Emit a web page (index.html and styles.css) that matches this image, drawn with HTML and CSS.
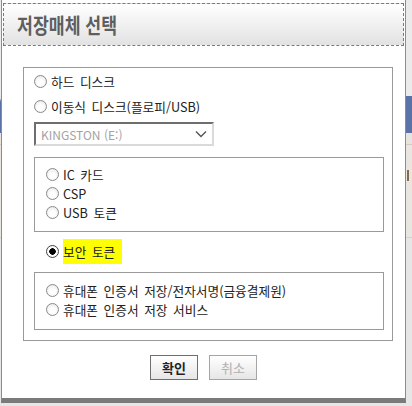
FILE: index.html
```html
<!DOCTYPE html>
<html lang="ko">
<head>
    <meta charset="UTF-8">
    <meta name="viewport" content="width=device-width, initial-scale=1.0">
    <title>저장매체 선택</title>
    <link rel="stylesheet" href="styles.css">
</head>
<body>
    <!-- page behind the modal -->
    <div class="backdrop">
        <div class="bd-top"></div>
        <div class="bd-nav"></div>
        <div class="bd-body"><span class="bd-tab"></span></div>
    </div>

    <div class="dialog">
        <div class="dialog-title">
            <h1>저장매체 선택</h1>
        </div>
        <div class="dialog-body">
            <div class="group">
                <label class="opt"><input type="radio" name="media"><span>하드 디스크</span></label>
                <label class="opt"><input type="radio" name="media"><span>이동식 디스크(플로피/USB)</span></label>
                <div class="drive">
                    <span>KINGSTON (E:)</span>
                    <svg width="12" height="8" viewBox="0 0 12 8"><path d="M1 1.5 L6 6.5 L11 1.5" fill="none" stroke="#555" stroke-width="1.4"/></svg>
                </div>

                <div class="subgroup">
                    <label class="opt opt-sm"><input type="radio" name="media"><span>IC 카드</span></label>
                    <label class="opt opt-sm"><input type="radio" name="media"><span>CSP</span></label>
                    <label class="opt opt-sm"><input type="radio" name="media"><span>USB 토큰</span></label>
                </div>

                <label class="opt opt-token"><input type="radio" name="media" checked><span class="mark">보안 토큰</span></label>

                <div class="subgroup subgroup-phone">
                    <label class="opt opt-sm"><input type="radio" name="media"><span>휴대폰 인증서 저장/전자서명(금융결제원)</span></label>
                    <label class="opt opt-sm"><input type="radio" name="media"><span>휴대폰 인증서 저장 서비스</span></label>
                </div>
            </div>

            <div class="actions">
                <button class="btn">확인</button>
                <button class="btn" disabled>취소</button>
            </div>
        </div>
    </div>
</body>
</html>
```

FILE: styles.css
```css
body {
    margin: 0;
    padding: 0;
    background-color: #e6e6e6;
    font-family: "Noto Sans CJK KR", "Noto Sans", sans-serif;
    font-size: 12.7px;
    color: #222;
    overflow: hidden;
}

/* page behind the modal */
.backdrop {
    position: absolute;
    top: 0;
    left: 0;
    right: 0;
}

.bd-top {
    height: 96px;
    background-color: #ebebeb;
}

.bd-nav {
    height: 37px;
    background-color: #5a72a6;
    border-top-left-radius: 6px;
}

.bd-body {
    height: 105px;
    background-color: #e9e5e1;
    border-top: 11px solid #e7e3df;
    border-bottom: 1px solid #d6d0ca;
    box-shadow: inset 0 1px 0 #d3cbc3;
    padding-left: 407px;
    box-sizing: border-box;
}

.bd-tab {
    display: inline-block;
    width: 4px;
    height: 11px;
    margin-top: 26px;
    border-left: 2px solid #8a6a48;
    border-right: 2px solid #8a6a48;
}

/* modal */
.dialog {
    position: absolute;
    top: 0;
    left: 1px;
    width: 403px;
    height: 398px;
    background-color: #fff;
    border-left: 1px solid #8c8c8c;
    border-right: 1px solid #8c8c8c;
    border-bottom: 5px solid #7a7a7a;
}

.dialog-title {
    margin: 3px 1px 0 1px;
    height: 41px;
    border: 1px dashed #7a7a7a;
    background: linear-gradient(to bottom, #ffffff, #e2e2e2);
}

.dialog-title h1 {
    margin: 0;
    padding: 8px 0 0 16px;
    font-size: 21px;
    line-height: 24px;
    font-weight: bold;
    color: #5e5e5e;
    transform: scaleX(0.82);
    transform-origin: left center;
    white-space: nowrap;
}

.dialog-body {
    padding: 21px 0 0 21px;
}

.group {
    width: 358px;
    border: 1px solid #9a9a9a;
    padding: 2px 0 10px 10px;
    box-sizing: content-box;
}

.opt {
    display: flex;
    align-items: center;
    height: 22px;
    margin-top: 3px;
    cursor: default;
    white-space: nowrap;
    word-spacing: 2px;
}

.opt:first-child {
    margin-top: 0;
}

.opt-sm {
    height: 19px;
    margin-top: 0;
}

.opt input {
    appearance: none;
    -webkit-appearance: none;
    width: 13px;
    height: 13px;
    margin: 0 4px 0 0;
    border: 1px solid #8a8a8a;
    border-radius: 50%;
    background: radial-gradient(circle at 50% 60%, #ffffff 30%, #e2e2e2 100%);
    box-sizing: border-box;
    flex: none;
}

.opt input:checked {
    background: radial-gradient(circle, #000 0, #000 3px, #fff 3.5px, #f0f0f0 100%);
    border-color: #444;
}

.drive {
    display: flex;
    align-items: center;
    justify-content: space-between;
    width: 180px;
    height: 24px;
    margin-top: 5px;
    padding: 0 5px 0 5px;
    box-sizing: border-box;
    border-top: 2px solid #6e6e6e;
    border-left: 2px solid #6e6e6e;
    border-right: 2px solid #dadada;
    border-bottom: 2px solid #dadada;
    color: #a3a3a3;
    font-size: 12px;
}

.subgroup {
    width: 337px;
    margin-top: 11px;
    border: 1px solid #9a9a9a;
    padding: 7px 0 9px 11px;
}

.subgroup-phone {
    padding: 8px 0 10px 11px;
}

.opt-token {
    height: 20px;
    margin: 9px 0 11px 12px;
}

.mark {
    background-color: #ffff00;
    padding: 3px 7px 3px 0;
}

.actions {
    display: flex;
    justify-content: center;
    gap: 11px;
    margin: 14px 0 0 -21px;
}

.btn {
    width: 48px;
    height: 25px;
    padding: 0;
    border: 1px solid #6f6f6f;
    background: linear-gradient(to bottom, #ffffff, #e6e6e6);
    font-family: "Noto Sans CJK KR", sans-serif;
    font-size: 13px;
    font-weight: bold;
    color: #222;
}

.btn:disabled {
    border-color: #a5a5a5;
    color: #b0b0b0;
    font-weight: normal;
}
```
